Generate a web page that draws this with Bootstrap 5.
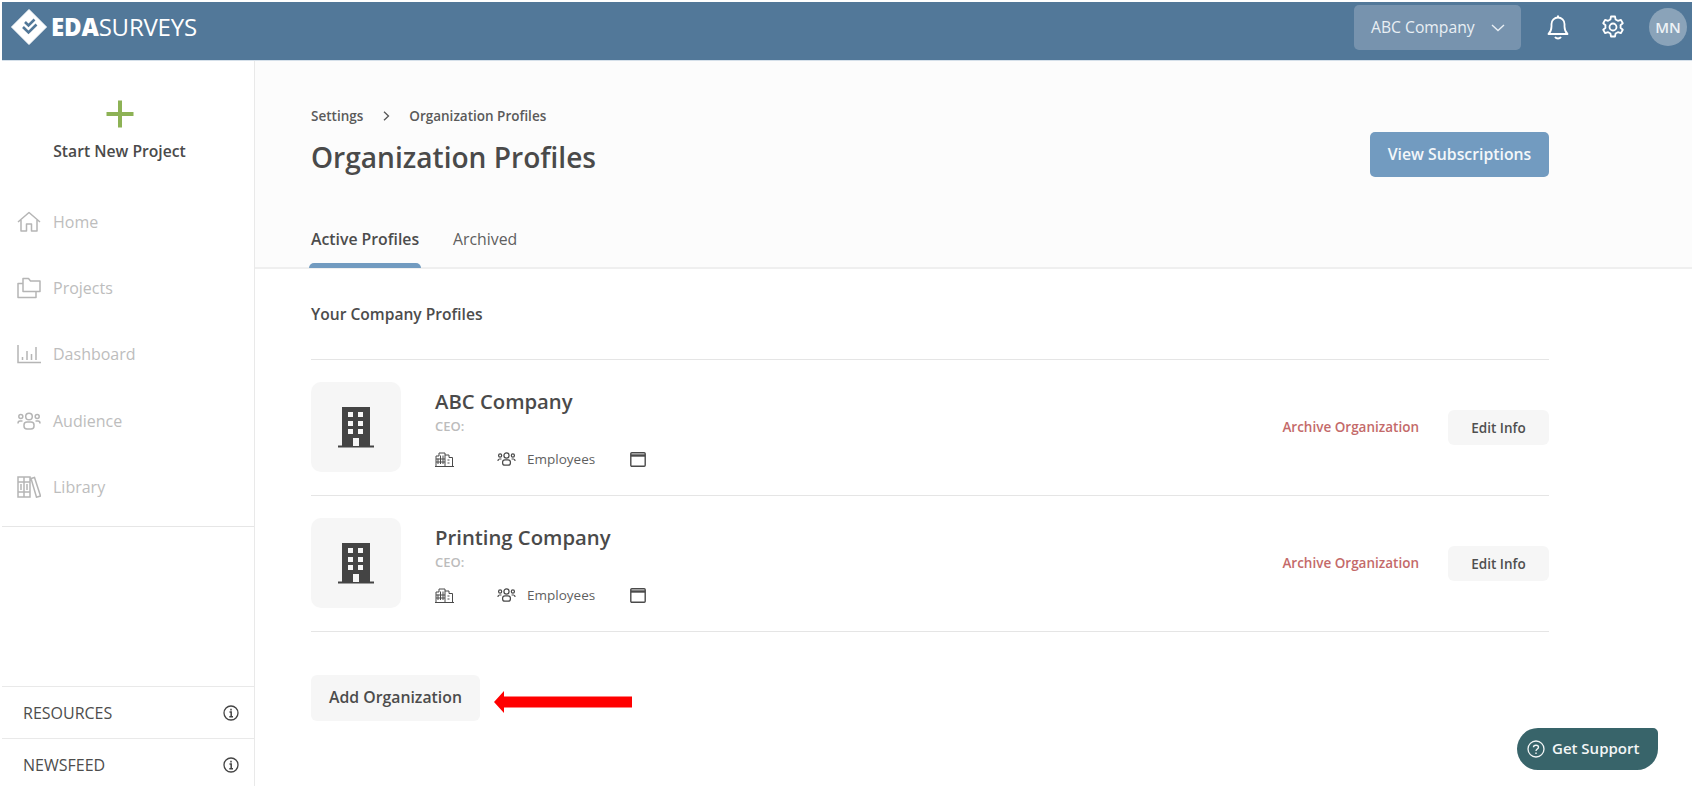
<!DOCTYPE html>
<html lang="en"><head><meta charset="utf-8"><title>Organization Profiles</title>
<link rel="stylesheet" href="https://cdn.jsdelivr.net/npm/bootstrap@5.3.0/dist/css/bootstrap.min.css">
<style>
html,body{height:790px;overflow:hidden}
body{font-family:"Open Sans","Noto Sans",sans-serif;color:#444;background:#fff;padding:2px 2px 5px 2px;position:relative}
svg{display:block;flex:none}
.topbar{height:59px;background:#527899;border-bottom:1px solid #d5e0ea;color:#fff;padding:0 5px 8px 9px}
.logo-word{font-size:24px;line-height:1;letter-spacing:-.2px;font-family:"Open Sans",sans-serif;margin-top:-1px}
.logo-word b{font-weight:800}
.logo-word span{font-weight:400}
.co-pick{width:167px;height:45px;background:#7793ae;border-radius:5px;color:#e9eff4;font-size:15.7px;padding:2px 16px 0 17px}
.bell-i{margin-left:25px}
.gear-i{margin-left:31px}
.avatar-mn{width:38px;height:38px;border-radius:50%;background:#8aa3b9;font-weight:600;font-size:15px;color:#eef2f5;margin-left:24px}
.shell{height:725px}
.side{width:253px;border-right:1px solid #e9e9e9;flex:none}
.new-proj{height:126px;padding-top:38px;padding-right:17px;font-weight:600;font-size:15.7px;color:#4a4a4a}
.new-proj svg{margin-bottom:11px}
.side-nav{height:340px;border-bottom:1px solid #e6e6e6;padding:1.500px 0 0 15px}
.side-item{height:66.300px;gap:12px;color:#bdbdbd;font-size:16px}
.side-foot{border-top:1px solid #e9e9e9;height:52px;padding:0 15px 0 21px;font-weight:500;font-size:16px;color:#4d4d4d}
.side-foot:last-child{margin-bottom:-4px}
.main-pane{min-width:0}
.head-zone{height:208px;background:#fcfcfc;border-bottom:2px solid #efefef;padding:0 143px 0 56px}
.crumbs{font-size:13.500px;font-weight:600;color:#5a5a5a;padding-top:45px;gap:19.500px;line-height:20px}
.page-h{font-size:28.100px;font-weight:600;color:#4a4a4a;margin:12px 0 0;line-height:38px}
.sub-btn{background:#729bc0;color:#f3f7fa;border:0;border-radius:5px;width:179px;height:45px;font-weight:600;font-size:15.800px;margin-top:71px;padding:1px 0 0}
.tabs-row{gap:34px;margin-top:51px;font-size:15.800px;line-height:22px}
.tab-on{font-weight:600;color:#4c4c4c;position:relative}
.tab-on::after{content:"";position:absolute;left:-2px;right:-2px;top:35px;height:5px;background:#729bc0;border-radius:5px 5px 0 0}
.tab-off{color:#5f5f5f}
.body-zone{padding:0 143px 0 56px}
.sec-title{font-size:15.600px;font-weight:600;color:#4c4c4c;height:91px;padding-top:34px;border-bottom:1px solid #e5e5e5;line-height:22px}
.org-row{height:136px;border-bottom:1px solid #e5e5e5}
.org-tile{width:90px;height:90px;background:#f6f6f6;border-radius:10px;margin-right:34px;margin-top:-1px}
.org-name{font-size:20.300px;font-weight:600;color:#4a4a4a;line-height:27px;margin-top:2px}
.org-ceo{font-size:13px;font-weight:600;color:#bcbcbc;line-height:18px;margin-top:2px}
.org-meta{font-size:13.500px;color:#5f5f5f;margin-top:14px;height:20px}
.meta-a{width:62px}.meta-b{width:133px;gap:11px}
.archive-link{color:#c46a6a;font-size:13.500px;font-weight:600;margin-right:29px}
.edit-btn{width:101px;height:35px;background:#f6f6f6;border:0;border-radius:6px;font-size:13.500px;font-weight:600;color:#4f4f4f;padding:1px 0 0}
.add-row{margin-top:43px;gap:14px}
.add-btn{width:169px;height:46px;background:#f6f6f6;border:0;border-radius:6px;font-weight:600;font-size:15.800px;color:#4c4c4c;padding:0}
.red-arrow{margin-top:16px}
.help-pill{position:absolute;left:1517px;top:728px;width:141px;height:42px;background:#38646a;color:#f3f6f6;border-radius:21px 5px 21px 21px;font-weight:600;font-size:15px;gap:7px;padding:0 0 1px 10px}
</style></head>
<body>
<header class="topbar d-flex align-items-center justify-content-between">
  <div class="d-flex align-items-center gap-1">
    <svg width="36" height="36" viewBox="0 0 36 36"><path d="M18 0.500 35.500 18 18 35.500 0.500 18Z" fill="#fff" stroke="#fff" stroke-linejoin="round" stroke-width="1"/><path d="M14 13l3.500 3.500 6-6M12 18l5.500 5.500 8-8" fill="none" stroke="#527899" stroke-width="2.600"/></svg>
    <div class="logo-word"><b>EDA</b><span>SURVEYS</span></div>
  </div>
  <div class="d-flex align-items-center">
    <div class="co-pick d-flex align-items-center justify-content-between"><span>ABC Company</span><svg width="14" height="8" viewBox="0 0 14 8"><path d="M1 1l6 5.500L13 1" fill="none" stroke="#e9eff4" stroke-width="1.400"/></svg></div>
    <svg class="bell-i" width="24" height="26" viewBox="0 0 24 26"><path d="M2.500 20c2-2 3-3.500 3-7.500V10a6.500 6.500 0 0 1 13 0v2.500c0 4 1 5.500 3 7.500Z" fill="none" stroke="#fff" stroke-width="1.800" stroke-linejoin="round"/><path d="M9 23c1.500 2 4.500 2 6 0" fill="none" stroke="#fff" stroke-width="2"/><path d="M12 1.500V3.500" stroke="#fff" stroke-width="2"/></svg>
    <svg class="gear-i" width="24" height="24" viewBox="0 0 24 24" fill="none" stroke="#fff" stroke-width="1.800" stroke-linejoin="round"><circle cx="12" cy="12" r="3.500"/><path d="M10 1.500h4l.6 3 2.300 1.300 2.900-1 2 3.400-2.300 2a8 8 0 0 1 0 2.600l2.300 2-2 3.400-2.900-1-2.300 1.300-.6 3h-4l-.6-3-2.300-1.300-2.900 1-2-3.400 2.300-2a8 8 0 0 1 0-2.600l-2.300-2 2-3.400 2.900 1 2.300-1.300Z"/></svg>
    <div class="avatar-mn d-flex align-items-center justify-content-center">MN</div>
  </div>
</header>
<div class="shell d-flex">
  <aside class="side d-flex flex-column">
    <div class="new-proj d-flex flex-column align-items-center">
      <svg width="30" height="30" viewBox="0 0 30 30"><path d="M15 1.500v27M1.500 15h27" stroke="#8db255" stroke-width="4"/></svg>
      <span>Start New Project</span>
    </div>
    <nav class="side-nav">
      <div class="side-item d-flex align-items-center"><svg width="24" height="22" viewBox="0 0 24 22" fill="none" stroke="#b5b5b5" stroke-width="1.500" stroke-linejoin="round"><path d="M1 11 12 1.500 23 11M4 9v11h5.500v-7h5v7H20V9"/></svg>Home</div>
      <div class="side-item d-flex align-items-center"><svg width="24" height="22" viewBox="0 0 24 22" fill="none" stroke="#b5b5b5" stroke-width="1.500" stroke-linejoin="round"><path d="M6 14.500H23V4H13.500L11.500 1.500H6Z"/><path d="M6 6.500H1V20.500H19V14.500"/></svg>Projects</div>
      <div class="side-item d-flex align-items-center"><svg width="24" height="20" viewBox="0 0 24 20" fill="none" stroke="#b5b5b5" stroke-width="1.500"><path d="M1 1v17.500h23M5.500 16v-3M10 16V7M14.500 16v-6M19 16V3"/></svg>Dashboard</div>
      <div class="side-item d-flex align-items-center"><svg width="24" height="18" viewBox="0 0 24 18" fill="none" stroke="#b5b5b5" stroke-width="1.500"><circle cx="12" cy="4.500" r="3.300"/><circle cx="3.800" cy="4.500" r="2"/><circle cx="20.200" cy="4.500" r="2"/><rect x="7" y="10" width="10" height="7" rx="3"/><path d="M5.500 9H3C1.500 9 1 10 1 11.500M18.500 9H21c1.500 0 2 1 2 2.500"/></svg>Audience</div>
      <div class="side-item d-flex align-items-center"><svg width="24" height="22" viewBox="0 0 24 22" fill="none" stroke="#b5b5b5" stroke-width="1.500"><path d="M1 1h6v20H1zM7 1h6v20H7zM1 6h12M1 16h12M4 8v6M10 8v6M14 2.500l3.500-1L23.500 20l-4 1.200Z"/></svg>Library</div>
    </nav>
    <div class="flex-grow-1"></div>
    <div class="side-foot d-flex align-items-center justify-content-between"><span>RESOURCES</span><svg width="16" height="16" viewBox="0 0 16 16" fill="none" stroke="#444" stroke-width="1.300"><circle cx="8" cy="8" r="7"/><path d="M6.500 7H8.200V11.500M6.300 11.700H10M8 3.800V5.500" stroke-width="1.500"/></svg></div>
    <div class="side-foot d-flex align-items-center justify-content-between"><span>NEWSFEED</span><svg width="16" height="16" viewBox="0 0 16 16" fill="none" stroke="#444" stroke-width="1.300"><circle cx="8" cy="8" r="7"/><path d="M6.500 7H8.200V11.500M6.300 11.700H10M8 3.800V5.500" stroke-width="1.500"/></svg></div>
  </aside>
  <main class="main-pane flex-grow-1">
    <section class="head-zone">
      <div class="d-flex justify-content-between align-items-start">
        <div>
          <div class="crumbs d-flex align-items-center"><span>Settings</span><svg width="7" height="10" viewBox="0 0 7 10"><path d="M1 .8 5.500 5 1 9.200" fill="none" stroke="#555" stroke-width="1.300"/></svg><span>Organization Profiles</span></div>
          <h1 class="page-h">Organization Profiles</h1>
        </div>
        <button class="sub-btn">View Subscriptions</button>
      </div>
      <div class="tabs-row d-flex"><span class="tab-on">Active Profiles</span><span class="tab-off">Archived</span></div>
    </section>
    <section class="body-zone">
      <div class="sec-title">Your Company Profiles</div>
      <div class="org-row d-flex align-items-center">
        <div class="org-tile d-flex align-items-center justify-content-center"><svg width="36" height="42" viewBox="0 0 36 42"><path d="M4 1h28v39H4Z" fill="#444"/><path d="M0 39.500h36v2H0Z" fill="#444"/><g fill="#f6f6f6"><rect x="10" y="6" width="5" height="5"/><rect x="20" y="6" width="5" height="5"/><rect x="10" y="15" width="5" height="5"/><rect x="20" y="15" width="5" height="5"/><rect x="10" y="23" width="5" height="5"/><rect x="20" y="23" width="5" height="5"/><rect x="15" y="32" width="6" height="8"/></g></svg></div>
        <div class="flex-grow-1">
          <div class="org-name">ABC Company</div>
          <div class="org-ceo">CEO:</div>
          <div class="org-meta d-flex align-items-center">
            <div class="meta-a"><svg width="19" height="15" viewBox="0 0 19 15" fill="none" stroke="#4a4a4a" stroke-width="1"><path d="M1 14.500V4h3V1h6v13.500M10 3h4v2.500h3.500v9M0 14.500h19M3 6.500v5.500M5.500 3.500v8.500M8 3.500v8.500M1 7h9M1 10h9M12.500 8h2M12.500 11h2"/></svg></div>
            <div class="meta-b d-flex align-items-center"><svg width="19" height="14" viewBox="0 0 24 18" fill="none" stroke="#4a4a4a" stroke-width="1.600"><circle cx="12" cy="4.500" r="3.300"/><circle cx="3.800" cy="4.500" r="2"/><circle cx="20.200" cy="4.500" r="2"/><rect x="7" y="10" width="10" height="7" rx="3"/><path d="M5.500 9H3C1.500 9 1 10 1 11.500M18.500 9H21c1.500 0 2 1 2 2.500"/></svg><span>Employees</span></div>
            <svg width="16" height="15" viewBox="0 0 16 15" fill="none" stroke="#4a4a4a" stroke-width="1.400"><rect x=".8" y=".8" width="14.400" height="13.400" rx="1"/><path d="M.8 3.500h14.400" stroke-width="2.400"/></svg>
          </div>
        </div>
        <a class="archive-link text-decoration-none" href="#">Archive Organization</a>
        <button class="edit-btn">Edit Info</button>
      </div>
      <div class="org-row d-flex align-items-center">
        <div class="org-tile d-flex align-items-center justify-content-center"><svg width="36" height="42" viewBox="0 0 36 42"><path d="M4 1h28v39H4Z" fill="#444"/><path d="M0 39.500h36v2H0Z" fill="#444"/><g fill="#f6f6f6"><rect x="10" y="6" width="5" height="5"/><rect x="20" y="6" width="5" height="5"/><rect x="10" y="15" width="5" height="5"/><rect x="20" y="15" width="5" height="5"/><rect x="10" y="23" width="5" height="5"/><rect x="20" y="23" width="5" height="5"/><rect x="15" y="32" width="6" height="8"/></g></svg></div>
        <div class="flex-grow-1">
          <div class="org-name">Printing Company</div>
          <div class="org-ceo">CEO:</div>
          <div class="org-meta d-flex align-items-center">
            <div class="meta-a"><svg width="19" height="15" viewBox="0 0 19 15" fill="none" stroke="#4a4a4a" stroke-width="1"><path d="M1 14.500V4h3V1h6v13.500M10 3h4v2.500h3.500v9M0 14.500h19M3 6.500v5.500M5.500 3.500v8.500M8 3.500v8.500M1 7h9M1 10h9M12.500 8h2M12.500 11h2"/></svg></div>
            <div class="meta-b d-flex align-items-center"><svg width="19" height="14" viewBox="0 0 24 18" fill="none" stroke="#4a4a4a" stroke-width="1.600"><circle cx="12" cy="4.500" r="3.300"/><circle cx="3.800" cy="4.500" r="2"/><circle cx="20.200" cy="4.500" r="2"/><rect x="7" y="10" width="10" height="7" rx="3"/><path d="M5.500 9H3C1.500 9 1 10 1 11.500M18.500 9H21c1.500 0 2 1 2 2.500"/></svg><span>Employees</span></div>
            <svg width="16" height="15" viewBox="0 0 16 15" fill="none" stroke="#4a4a4a" stroke-width="1.400"><rect x=".8" y=".8" width="14.400" height="13.400" rx="1"/><path d="M.8 3.500h14.400" stroke-width="2.400"/></svg>
          </div>
        </div>
        <a class="archive-link text-decoration-none" href="#">Archive Organization</a>
        <button class="edit-btn">Edit Info</button>
      </div>
      <div class="add-row d-flex align-items-start">
        <button class="add-btn">Add Organization</button>
        <svg class="red-arrow" width="138" height="22" viewBox="0 0 138 22"><path d="M0 11 10 0V5.500H138V16.500H10V22Z" fill="#f00"/></svg>
      </div>
    </section>
  </main>
</div>
<div class="help-pill d-flex align-items-center"><svg width="18" height="18" viewBox="0 0 18 18" fill="none" stroke="#f3f6f6" stroke-width="1.300"><circle cx="9" cy="9" r="8"/><path d="M6.500 7.200C6.500 4.500 11.500 4.500 11.500 7.200 11.500 9 9 9 9 11M9 12.500V14" stroke-width="1.400"/></svg>Get Support</div>
</body></html>
